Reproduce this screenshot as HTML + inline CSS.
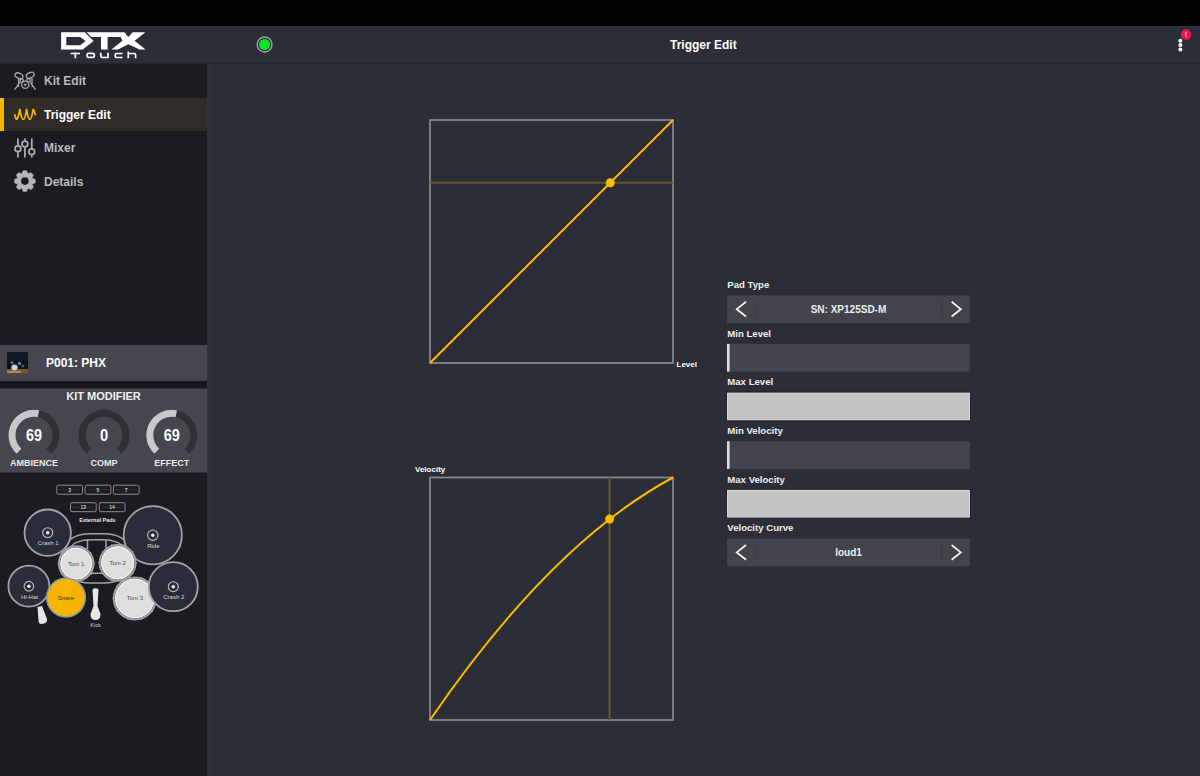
<!DOCTYPE html>
<html><head><meta charset="utf-8">
<style>
*{margin:0;padding:0;box-sizing:border-box}
html,body{width:1200px;height:776px;overflow:hidden;background:#000;font-family:"Liberation Sans",sans-serif;color:#fff}
.a{position:absolute}
#hdr{left:0;top:26px;width:1200px;height:38px;background:#2c2e37;border-top:1px solid #34363f;border-bottom:1px solid #24252c}
#side{left:0;top:64px;width:207px;height:712px;background:#1c1b21}
#main{left:207px;top:64px;width:993px;height:712px;background:#2c2e37}
.mi{position:absolute;left:0;width:207px;height:33px}
.mi span{position:absolute;left:44px;top:10px;font-size:12px;font-weight:bold;color:#d0d0d0;line-height:14px}
.lbl{position:absolute;left:727px;font-size:10px;font-weight:bold;color:#eee;line-height:12px}
.box{position:absolute;left:727px;width:243px;height:28px;background:#42434b}
</style></head>
<body>
<div id="hdr" class="a"></div>
<div id="side" class="a"></div>
<div id="main" class="a"></div>
<div class="a" style="left:207px;top:64px;width:4px;height:712px;background:linear-gradient(90deg,#2f3140,#2c2e37)"></div>

<!-- header content -->
<svg class="a" style="left:0;top:0" width="1200" height="64">
  <path fill="#fff" fill-rule="evenodd" d="M61.1 32.2 H84.8 L93.6 41 L82.8 49.6 H61.1 Z M66.3 37 H80.2 L85.6 41 L80.2 45.2 H66.3 Z"/>
  <path fill="#fff" d="M86.6 32.2 H118.6 L122.4 37 H107.6 V49.6 H101 V37 H91.4 Z"/>
  <path fill="#fff" d="M118.6 32.2 H124.4 L128.4 36.9 L132.6 32.2 H145.4 L134.6 40.8 L145.6 49.6 H139.4 L128.4 44.2 L118 49.6 H111.4 L122.4 40.8 Z"/>
  <g fill="none" stroke="#fff" stroke-width="1.7">
   <path d="M70.6 53.5 H80 M75.3 52.3 V58.2"/>
   <rect x="87.1" y="53.4" width="7.2" height="4" rx="1.4"/>
   <path d="M100.8 52.8 V56 Q100.8 57.5 102.4 57.5 H108 V52.8"/>
   <path d="M122.5 53.5 H116.6 Q115.2 53.5 115.2 54.9 V56.1 Q115.2 57.5 116.6 57.5 H122.5"/>
   <path d="M128.3 51.6 V58.2 M128.3 53.5 H134.2 Q135.6 53.5 135.6 54.9 V58.2"/>
  </g>
  <circle cx="264.6" cy="44.5" r="7.4" fill="#1a1c22" stroke="#a09aa4" stroke-width="1.6"/>
  <circle cx="264.6" cy="44.5" r="5.6" fill="#0be62a"/>
  <circle cx="1186.1" cy="34.5" r="6.8" fill="#0e3526"/>
  <circle cx="1186.1" cy="34.5" r="5.4" fill="#f0104c"/>
  <path d="M1186.3 31.8 Q1184.9 34.5 1186.3 37.2" fill="none" stroke="#fff" stroke-width="0.9"/>
  <circle cx="1180.4" cy="40.7" r="2" fill="#fff"/>
  <circle cx="1180.4" cy="45" r="2" fill="#fff"/>
  <circle cx="1180.4" cy="49.4" r="2" fill="#fff"/>
</svg>
<div class="a" style="left:670px;top:38px;font-size:12px;font-weight:bold;line-height:14px">Trigger Edit</div>

<!-- sidebar -->
<svg class="a" style="left:0;top:0" width="207" height="776">
<rect x="0" y="98" width="207" height="33" fill="#312b27"/>
<rect x="0" y="98" width="4" height="33" fill="#f5b800"/>
<text x="44" y="85.3" font-family="Liberation Sans" font-weight="bold" font-size="12" fill="#b9b9bc">Kit Edit</text>
<text x="44" y="118.7" font-family="Liberation Sans" font-weight="bold" font-size="12" fill="#ffffff">Trigger Edit</text>
<text x="44" y="152" font-family="Liberation Sans" font-weight="bold" font-size="12" fill="#b9b9bc">Mixer</text>
<text x="44" y="185.5" font-family="Liberation Sans" font-weight="bold" font-size="12" fill="#b9b9bc">Details</text>
<g fill="none" stroke="#ababae" stroke-width="1.3" stroke-linecap="round">
<ellipse cx="19" cy="75.8" rx="4.2" ry="2.5" transform="rotate(25 19 75.8)"/>
<ellipse cx="30.2" cy="75.2" rx="4.2" ry="2.5" transform="rotate(-25 30.2 75.2)"/>
<circle cx="25.3" cy="84.8" r="3.6"/>
<circle cx="21.6" cy="80.6" r="1.7"/><circle cx="28.6" cy="80.4" r="1.7"/>
<path d="M14.8 89.3 L19.5 82.8 M35.2 89.3 L30.8 83.2 M18.6 78.5 L18.6 86.5 M32 78.2 V86.5"/>
</g>
<circle cx="25.3" cy="84.8" r="1.2" fill="#ababae"/>
<path d="M14.8 114.8 Q15.8 119.8 16.9 119 Q18.2 118 19.9 109.5 Q21.6 119.5 23.3 119.3 Q25 119.5 26.6 109.3 Q28.2 119.5 29.8 119.3 Q31.5 119.5 33.2 109.4 Q34.2 110 35.3 114.6" fill="none" stroke="#f0b400" stroke-width="1.8" stroke-linejoin="round" stroke-linecap="round"/>
<g fill="none" stroke="#b0b0b2" stroke-width="1.7">
<path d="M17.9 138.5 V145.2 M17.9 152.2 V157.4 M24.9 138.5 V140.6 M24.9 147.5 V157.4 M31.8 138.5 V148.2 M31.8 155.2 V157.4"/>
<circle cx="17.9" cy="148.7" r="2.9"/><circle cx="24.9" cy="144" r="2.9"/><circle cx="31.8" cy="151.7" r="2.9"/>
</g>
<path d="M22.16 173.59 L23.24 170.83 L26.56 170.83 L27.64 173.59 L28.27 173.85 L30.99 172.67 L33.33 175.01 L32.15 177.73 L32.41 178.36 L35.17 179.44 L35.17 182.76 L32.41 183.84 L32.15 184.47 L33.33 187.19 L30.99 189.53 L28.27 188.35 L27.64 188.61 L26.56 191.37 L23.24 191.37 L22.16 188.61 L21.53 188.35 L18.81 189.53 L16.47 187.19 L17.65 184.47 L17.39 183.84 L14.63 182.76 L14.63 179.44 L17.39 178.36 L17.65 177.73 L16.47 175.01 L18.81 172.67 L21.53 173.85 Z" fill="#b5b5b7" stroke="#b5b5b7" stroke-width="0.8" stroke-linejoin="round"/>
<circle cx="24.9" cy="181.1" r="3.8" fill="#1c1b21"/>
<rect x="0" y="345" width="207" height="36" fill="#45464e"/>
<rect x="0" y="381" width="207" height="7.5" fill="#17161b"/>
<rect x="0" y="388.5" width="207" height="84" fill="#45464e"/>
<rect x="7" y="352" width="21" height="21" fill="#0c121c"/>
<rect x="7" y="352" width="21" height="9" fill="#111926"/>
<rect x="7" y="369" width="21" height="4" fill="#7a5a28"/>
<rect x="7" y="371" width="14" height="2" fill="#b88a3a"/>
<ellipse cx="14.5" cy="367.5" rx="3.2" ry="3" fill="#c8d2e0"/>
<circle cx="19.5" cy="363.5" r="1.8" fill="#6a7a92"/>
<circle cx="12" cy="362.5" r="1.5" fill="#8a7040"/>
<circle cx="23" cy="366" r="1.5" fill="#4a5a70"/>
<text x="46" y="366.5" font-family="Liberation Sans" font-weight="bold" font-size="12" fill="#fff">P001: PHX</text>
<text x="103.5" y="399.5" font-family="Liberation Sans" font-weight="bold" font-size="11" fill="#f0f0f0" text-anchor="middle">KIT MODIFIER</text>
<path d="M19.00 451.29 A22 22 0 1 1 49.00 451.29" fill="none" stroke="#2e3036" stroke-width="7"/>
<path d="M19.00 451.29 A22 22 0 0 1 38.52 413.67" fill="none" stroke="#c8c8c8" stroke-width="7"/>
<text x="34" y="440.8" font-family="Liberation Sans" font-weight="bold" font-size="16" fill="#fff" text-anchor="middle" textLength="16" lengthAdjust="spacingAndGlyphs">69</text>
<text x="34" y="466.2" font-family="Liberation Sans" font-weight="bold" font-size="9" fill="#eaeaea" text-anchor="middle">AMBIENCE</text>
<path d="M89.00 451.29 A22 22 0 1 1 119.00 451.29" fill="none" stroke="#2e3036" stroke-width="7"/>
<text x="104" y="440.8" font-family="Liberation Sans" font-weight="bold" font-size="16" fill="#fff" text-anchor="middle" textLength="8.2" lengthAdjust="spacingAndGlyphs">0</text>
<text x="104" y="466.2" font-family="Liberation Sans" font-weight="bold" font-size="9" fill="#eaeaea" text-anchor="middle">COMP</text>
<path d="M156.80 451.29 A22 22 0 1 1 186.80 451.29" fill="none" stroke="#2e3036" stroke-width="7"/>
<path d="M156.80 451.29 A22 22 0 0 1 176.32 413.67" fill="none" stroke="#c8c8c8" stroke-width="7"/>
<text x="171.8" y="440.8" font-family="Liberation Sans" font-weight="bold" font-size="16" fill="#fff" text-anchor="middle" textLength="16" lengthAdjust="spacingAndGlyphs">69</text>
<text x="171.8" y="466.2" font-family="Liberation Sans" font-weight="bold" font-size="9" fill="#eaeaea" text-anchor="middle">EFFECT</text>
<g fill="none" stroke="#8d8d90" stroke-width="1">
<rect x="56.8" y="485.2" width="25.7" height="9" rx="1.5"/>
<rect x="85.1" y="485.2" width="25.7" height="9" rx="1.5"/>
<rect x="113.4" y="485.2" width="25.7" height="9" rx="1.5"/>
<rect x="70.5" y="502.7" width="25.7" height="9" rx="1.5"/>
<rect x="99.3" y="502.7" width="25.7" height="9" rx="1.5"/>
</g>
<g stroke="#3a3a40" stroke-width="0.8">
<path d="M59.3 489.7 H66.3 M72.8 489.7 H79.8"/>
<path d="M87.6 489.7 H94.6 M101.1 489.7 H108.1"/>
<path d="M115.9 489.7 H122.9 M129.4 489.7 H136.4"/>
<path d="M73 507.2 H80 M86.5 507.2 H93.5"/>
<path d="M101.8 507.2 H108.8 M115.3 507.2 H122.3"/>
</g>
<text x="69.6" y="491.9" font-family="Liberation Sans" font-weight="bold" font-size="5" fill="#cfcfcf" text-anchor="middle">3</text>
<text x="97.89999999999999" y="491.9" font-family="Liberation Sans" font-weight="bold" font-size="5" fill="#cfcfcf" text-anchor="middle">5</text>
<text x="126.2" y="491.9" font-family="Liberation Sans" font-weight="bold" font-size="5" fill="#cfcfcf" text-anchor="middle">7</text>
<text x="83.3" y="509.4" font-family="Liberation Sans" font-weight="bold" font-size="5" fill="#cfcfcf" text-anchor="middle">13</text>
<text x="112.1" y="509.4" font-family="Liberation Sans" font-weight="bold" font-size="5" fill="#cfcfcf" text-anchor="middle">14</text>
<text x="97.5" y="522.3" font-family="Liberation Sans" font-weight="bold" font-size="5.5" fill="#e8e8e8" text-anchor="middle">External Pads</text>
<g fill="none" stroke="#a3a3a6" stroke-width="1.5">
<rect x="66" y="533.8" width="62" height="49.2" rx="24" ry="13"/>
<rect x="71.5" y="539.8" width="51" height="33.5" rx="20" ry="8"/>
<path d="M87.5 539.5 V549 M106 539.5 V549"/>
</g>
<circle cx="47.7" cy="532.7" r="23.2" fill="#2a2d39" stroke="#a2a2a6" stroke-width="1.8"/>
<circle cx="47.7" cy="532.7" r="5" fill="none" stroke="#c0c0c4" stroke-width="1.1"/>
<circle cx="47.7" cy="532.7" r="1.7" fill="#f0f0f0"/>
<text x="48.2" y="545.2" font-family="Liberation Sans" font-size="6" fill="#d8d8dc" text-anchor="middle">Crash 1</text>
<circle cx="152.8" cy="535.2" r="29.1" fill="#2a2d39" stroke="#a2a2a6" stroke-width="1.8"/>
<circle cx="152.8" cy="535.2" r="5.2" fill="none" stroke="#c0c0c4" stroke-width="1.1"/>
<circle cx="152.8" cy="535.2" r="1.7" fill="#f0f0f0"/>
<text x="153.3" y="547.7" font-family="Liberation Sans" font-size="6" fill="#d8d8dc" text-anchor="middle">Ride</text>
<circle cx="81.70" cy="546.67" r="1" fill="#a4a4a8"/>
<circle cx="90.60" cy="553.14" r="1" fill="#a4a4a8"/>
<circle cx="94.00" cy="563.60" r="1" fill="#a4a4a8"/>
<circle cx="90.60" cy="574.06" r="1" fill="#a4a4a8"/>
<circle cx="81.70" cy="580.53" r="1" fill="#a4a4a8"/>
<circle cx="70.70" cy="580.53" r="1" fill="#a4a4a8"/>
<circle cx="61.80" cy="574.06" r="1" fill="#a4a4a8"/>
<circle cx="58.40" cy="563.60" r="1" fill="#a4a4a8"/>
<circle cx="61.80" cy="553.14" r="1" fill="#a4a4a8"/>
<circle cx="70.70" cy="546.67" r="1" fill="#a4a4a8"/>
<circle cx="76.2" cy="563.6" r="17.6" fill="#dedede" stroke="#a0a0a4" stroke-width="1.4"/>
<circle cx="76.2" cy="563.6" r="16.400000000000002" fill="none" stroke="#505055" stroke-width="0.7"/>
<circle cx="76.2" cy="563.6" r="15.500000000000002" fill="none" stroke="#f6f6f6" stroke-width="1"/>
<text x="76.2" y="565.6" font-family="Liberation Sans" font-size="6" fill="#4a4a4e" text-anchor="middle">Tom 1</text>
<circle cx="123.29" cy="545.30" r="1" fill="#a4a4a8"/>
<circle cx="132.49" cy="551.98" r="1" fill="#a4a4a8"/>
<circle cx="136.00" cy="562.80" r="1" fill="#a4a4a8"/>
<circle cx="132.49" cy="573.62" r="1" fill="#a4a4a8"/>
<circle cx="123.29" cy="580.30" r="1" fill="#a4a4a8"/>
<circle cx="111.91" cy="580.30" r="1" fill="#a4a4a8"/>
<circle cx="102.71" cy="573.62" r="1" fill="#a4a4a8"/>
<circle cx="99.20" cy="562.80" r="1" fill="#a4a4a8"/>
<circle cx="102.71" cy="551.98" r="1" fill="#a4a4a8"/>
<circle cx="111.91" cy="545.30" r="1" fill="#a4a4a8"/>
<circle cx="117.6" cy="562.8" r="18.2" fill="#dedede" stroke="#a0a0a4" stroke-width="1.4"/>
<circle cx="117.6" cy="562.8" r="17.0" fill="none" stroke="#505055" stroke-width="0.7"/>
<circle cx="117.6" cy="562.8" r="16.099999999999998" fill="none" stroke="#f6f6f6" stroke-width="1"/>
<text x="117.6" y="564.8" font-family="Liberation Sans" font-size="6" fill="#4a4a4e" text-anchor="middle">Tom 2</text>
<circle cx="28.9" cy="586.2" r="20.5" fill="#2a2d39" stroke="#a2a2a6" stroke-width="1.8"/>
<circle cx="28.9" cy="586.2" r="4.8" fill="none" stroke="#c0c0c4" stroke-width="1.1"/>
<circle cx="28.9" cy="586.2" r="1.7" fill="#f0f0f0"/>
<text x="29.4" y="598.7" font-family="Liberation Sans" font-size="6" fill="#d8d8dc" text-anchor="middle">Hi-Hat</text>
<path d="M37.5 607 L42 606 L47 619 Q47.5 622.5 44 623.5 L41.5 624 Q38.5 624 38.5 620.5 Z" fill="#e6e6e6"/>
<circle cx="66" cy="597.6" r="19.3" fill="#f5b400" stroke="#8c98aa" stroke-width="1.5"/>
<text x="66" y="599.8" font-family="Liberation Sans" font-size="6" fill="#3a3020" text-anchor="middle">Snare</text>
<path d="M92.5 589.5 Q95.5 587 98.5 589.5 L97.5 606 L100.5 614 Q100.5 620 95.5 620 Q90.5 620 90.5 614 L93.5 606 Z" fill="#e6e6e6"/>
<text x="95.5" y="626.5" font-family="Liberation Sans" font-size="5.5" fill="#d0d0d0" text-anchor="middle">Kick</text>
<circle cx="141.44" cy="577.95" r="1" fill="#a4a4a8"/>
<circle cx="152.19" cy="585.76" r="1" fill="#a4a4a8"/>
<circle cx="156.30" cy="598.40" r="1" fill="#a4a4a8"/>
<circle cx="152.19" cy="611.04" r="1" fill="#a4a4a8"/>
<circle cx="141.44" cy="618.85" r="1" fill="#a4a4a8"/>
<circle cx="128.16" cy="618.85" r="1" fill="#a4a4a8"/>
<circle cx="117.41" cy="611.04" r="1" fill="#a4a4a8"/>
<circle cx="113.30" cy="598.40" r="1" fill="#a4a4a8"/>
<circle cx="117.41" cy="585.76" r="1" fill="#a4a4a8"/>
<circle cx="128.16" cy="577.95" r="1" fill="#a4a4a8"/>
<circle cx="134.8" cy="598.4" r="21.3" fill="#dedede" stroke="#a0a0a4" stroke-width="1.4"/>
<circle cx="134.8" cy="598.4" r="20.1" fill="none" stroke="#505055" stroke-width="0.7"/>
<circle cx="134.8" cy="598.4" r="19.2" fill="none" stroke="#f6f6f6" stroke-width="1"/>
<text x="134.8" y="600.4" font-family="Liberation Sans" font-size="6" fill="#4a4a4e" text-anchor="middle">Tom 3</text>
<circle cx="173.3" cy="586.7" r="24.5" fill="#2a2d39" stroke="#a2a2a6" stroke-width="1.8"/>
<circle cx="173.3" cy="586.7" r="5" fill="none" stroke="#c0c0c4" stroke-width="1.1"/>
<circle cx="173.3" cy="586.7" r="1.7" fill="#f0f0f0"/>
<text x="173.8" y="599.2" font-family="Liberation Sans" font-size="6" fill="#d8d8dc" text-anchor="middle">Crash 2</text>
</svg>
<!-- graphs -->
<svg class="a" style="left:0;top:0" width="1200" height="776">
  <rect x="430" y="120" width="243" height="243" fill="none" stroke="#84858a" stroke-width="1.8"/>
  <line x1="430" y1="182.8" x2="673" y2="182.8" stroke="#66562f" stroke-width="2"/>
  <line x1="430" y1="363" x2="673" y2="120" stroke="#f8bb00" stroke-width="2"/>
  <circle cx="610.3" cy="182.8" r="4.5" fill="#f8bb00"/>
  <rect x="430" y="477.5" width="243" height="242.5" fill="none" stroke="#84858a" stroke-width="1.8"/>
  <line x1="609.6" y1="477.5" x2="609.6" y2="720" stroke="#66562f" stroke-width="2"/>
  <path d="M430 720 Q551.5 542.9 673 477.5" fill="none" stroke="#f8bb00" stroke-width="2"/>
  <circle cx="609.6" cy="519.1" r="4.5" fill="#f8bb00"/>
</svg>
<div class="a" style="left:676.5px;top:359.5px;font-size:8px;font-weight:bold;line-height:10px">Level</div>
<div class="a" style="left:415px;top:465px;font-size:8px;font-weight:bold;line-height:10px">Velocity</div>

<!-- controls -->
<svg class="a" style="left:0;top:0" width="1200" height="776">
<text x="727.3" y="287.80" font-family="Liberation Sans" font-weight="bold" font-size="9.6" fill="#ededef">Pad Type</text>
<rect x="727" y="295.30" width="243" height="27.7" fill="#42434b"/>
<path d="M755.5 301.30 V317.00 M941.8 301.30 V317.00" stroke="#393a41" stroke-width="1"/>
<path d="M746 301.80 L736.8 309.15 L746 316.50 M951.6 301.80 L960.8 309.15 L951.6 316.50" fill="none" stroke="#f2f2f2" stroke-width="1.8"/>
<text x="848.5" y="313.10" font-family="Liberation Sans" font-weight="bold" font-size="10" fill="#ececee" text-anchor="middle">SN: XP125SD-M</text>
<text x="727.3" y="336.50" font-family="Liberation Sans" font-weight="bold" font-size="9.6" fill="#ededef">Min Level</text>
<rect x="727" y="343.95" width="243" height="27.7" fill="#42434b"/>
<rect x="727" y="343.95" width="2.6" height="27.7" fill="#dcdcdc"/>
<text x="727.3" y="385.20" font-family="Liberation Sans" font-weight="bold" font-size="9.6" fill="#ededef">Max Level</text>
<rect x="726" y="391.60" width="245" height="29.7" fill="#1f2026"/>
<rect x="727" y="392.60" width="243" height="27.7" fill="#d6d6d6"/>
<rect x="728" y="393.60" width="241" height="25.7" fill="#c3c3c3"/>
<text x="727.3" y="433.90" font-family="Liberation Sans" font-weight="bold" font-size="9.6" fill="#ededef">Min Velocity</text>
<rect x="727" y="441.25" width="243" height="27.7" fill="#42434b"/>
<rect x="727" y="441.25" width="2.6" height="27.7" fill="#dcdcdc"/>
<text x="727.3" y="482.60" font-family="Liberation Sans" font-weight="bold" font-size="9.6" fill="#ededef">Max Velocity</text>
<rect x="726" y="488.90" width="245" height="29.7" fill="#1f2026"/>
<rect x="727" y="489.90" width="243" height="27.7" fill="#d6d6d6"/>
<rect x="728" y="490.90" width="241" height="25.7" fill="#c3c3c3"/>
<text x="727.3" y="531.30" font-family="Liberation Sans" font-weight="bold" font-size="9.6" fill="#ededef">Velocity Curve</text>
<rect x="727" y="538.55" width="243" height="27.7" fill="#42434b"/>
<path d="M755.5 544.55 V560.25 M941.8 544.55 V560.25" stroke="#393a41" stroke-width="1"/>
<path d="M746 545.05 L736.8 552.40 L746 559.75 M951.6 545.05 L960.8 552.40 L951.6 559.75" fill="none" stroke="#f2f2f2" stroke-width="1.8"/>
<text x="848.5" y="556.35" font-family="Liberation Sans" font-weight="bold" font-size="10" fill="#ececee" text-anchor="middle">loud1</text>
</svg>
</body></html>
